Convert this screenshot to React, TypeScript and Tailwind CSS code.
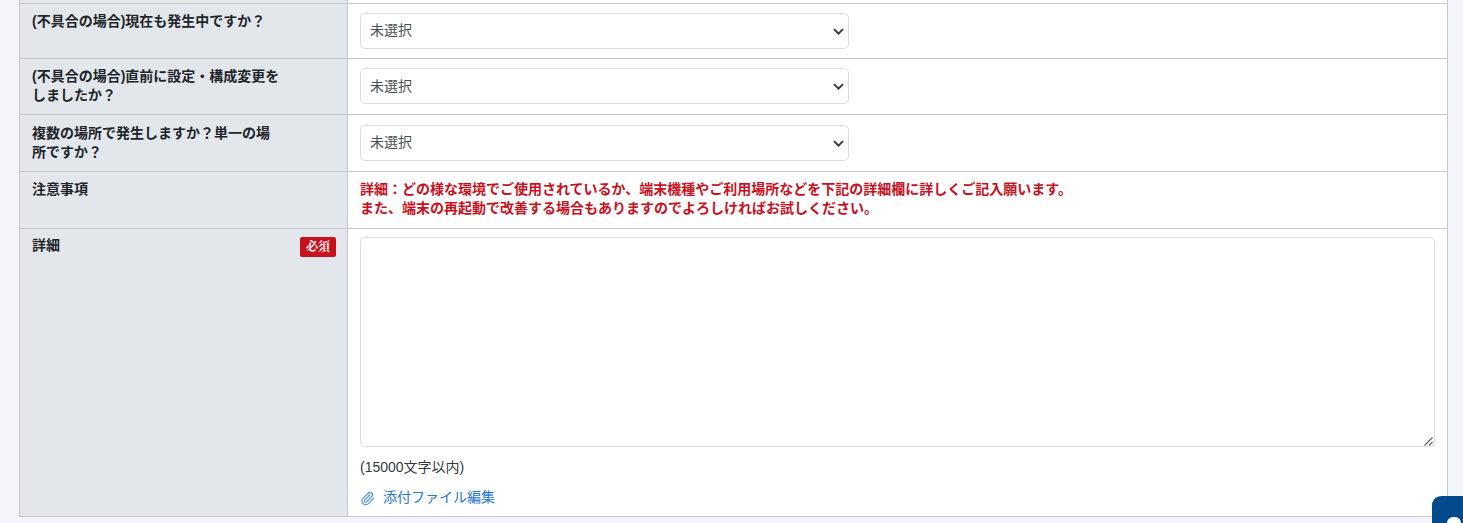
import React from "react";
import { Paperclip } from "lucide-react";

const Row: React.FC<{
  label: string;
  badge?: boolean;
  className: string;
  labelTop?: string;
  valueTop?: string;
  children: React.ReactNode;
}> = ({ label, badge, className, labelTop = "pt-[8px]", valueTop = "pt-[9px]", children }) => (
  <div className={`flex border-b border-[#c4c7cc] ${className}`}>
    <div className={`flex w-[328px] shrink-0 justify-between border-r border-[#c4c7cc] bg-[#e3e6eb] pr-[11px] pl-[12px] ${labelTop}`}>
      <div className="w-[249px] text-[14px] leading-[19px] font-bold text-[#212529]">{label}</div>
      {badge && (
        <span className="mt-[1px] flex h-[20px] w-[36px] items-center justify-center rounded-[2px] bg-[#c7111e] font-['Liberation_Serif','Noto_Serif_CJK_JP','Noto_Sans_CJK_JP',serif] text-[12px] font-bold text-white">
          必須
        </span>
      )}
    </div>
    <div className={`min-w-0 flex-1 bg-white px-[12px] ${valueTop}`}>{children}</div>
  </div>
);

const Pick: React.FC<{ raised?: boolean }> = ({ raised }) => (
  <div className="relative w-[489px]">
    <select
      className={`h-[36px] w-full appearance-none rounded-[5px] border border-[#d9dee6] bg-white pl-[9px] text-[14px] text-[#495057] ${raised ? "pb-[2px]" : ""}`}
    >
      <option>未選択</option>
    </select>
    <svg className="absolute top-[15px] right-[5px] h-[7px] w-[11px]" viewBox="0 0 11 7" fill="none">
      <path d="M1 1.2l4.5 4.5 4.5-4.5" stroke="#343a40" strokeWidth="1.9" />
    </svg>
  </div>
);

export default function App() {
  return (
    <div className="relative h-[523px] w-full overflow-hidden bg-[#f3f5fb] font-['Liberation_Sans','Noto_Sans_CJK_JP',sans-serif]">
      <div className="ml-[19px] w-[1429px] border-x border-[#c4c7cc]">
        <div className="flex h-[4px] border-b border-[#c4c7cc]">
          <div className="w-[328px] border-r border-[#c4c7cc] bg-[#e3e6eb]" />
          <div className="flex-1 bg-white" />
        </div>
        <Row label="(不具合の場合)現在も発生中ですか？" className="h-[55px]">
          <Pick raised />
        </Row>
        <Row label="(不具合の場合)直前に設定・構成変更をしましたか？" className="h-[56px]">
          <Pick />
        </Row>
        <Row label="複数の場所で発生しますか？単一の場所ですか？" className="h-[57px]" labelTop="pt-[9px]" valueTop="pt-[10px]">
          <Pick raised />
        </Row>
        <Row label="注意事項" className="h-[57px]" valueTop="pt-[8px]">
          <p className="text-[14px] leading-[19px] font-bold text-[#c7111e]">
            詳細：どの様な環境でご使用されているか、端末機種やご利用場所などを下記の詳細欄に詳しくご記入願います。
            <br />
            また、端末の再起動で改善する場合もありますのでよろしければお試しください。
          </p>
        </Row>
        <Row label="詳細" badge className="h-[288px]" labelTop="pt-[7px]" valueTop="pt-[8px]">
          <div className="relative">
            <textarea className="block h-[210px] w-full resize-none rounded-[5px] border border-[#d9dee6] bg-white" />
            <svg className="absolute right-[2px] bottom-[1px] h-[9px] w-[9px]" viewBox="0 0 9 9" fill="none">
              <path d="M0.5 8.5L8.5 0.5M5 8.5L8.5 5" stroke="#5f6368" strokeWidth="1.2" />
            </svg>
          </div>
          <p className="mt-[10px] text-[14px] leading-[20px] text-[#343a40]">(15000文字以内)</p>
          <a className="mt-[10px] flex items-center gap-[8px] text-[14px] leading-[20px] text-[#1f78d1]">
            <Paperclip className="mt-[2px] h-[15px] w-[15px] text-[#5b9bdc]" />
            添付ファイル編集
          </a>
        </Row>
      </div>
      <div className="absolute top-[496px] left-[1432px] h-[40px] w-[40px] rounded-[9px] bg-[#034a8c]">
        <div className="mt-[21px] ml-[15px] h-[12px] w-[14px] rounded-full bg-white" />
      </div>
    </div>
  );
}
